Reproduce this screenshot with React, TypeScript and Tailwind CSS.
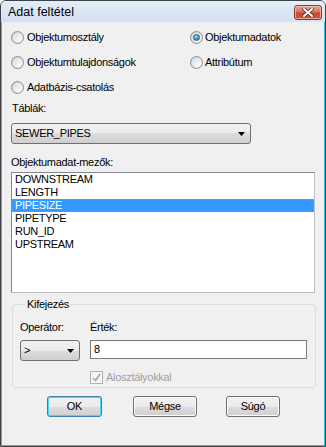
import React from "react";

const FONT = { fontFamily: '"Liberation Sans", Arial, sans-serif' };

function Radio({ checked }: { checked?: boolean }) {
  return (
    <div className="w-[13px] h-[13px] rounded-full border border-[#8d8f91] bg-[linear-gradient(135deg,#c9cbcd,#f7f8f8)] flex items-center justify-center shrink-0">
      <div className="w-[9px] h-[9px] rounded-full bg-[linear-gradient(135deg,#dcdcdc,#ffffff)] flex items-center justify-center">
        {checked && (
          <div className="w-[7px] h-[7px] rounded-full bg-[radial-gradient(circle_at_40%_35%,#b7e6fb,#3d8fd0_55%,#1d5a93)] border border-[#2c5f8f]" />
        )}
      </div>
    </div>
  );
}

function Arrow() {
  return (
    <svg width="7" height="4" viewBox="0 0 7 4" className="shrink-0">
      <path d="M0 0 H7 L3.5 4 Z" fill="#000" />
    </svg>
  );
}

function Combo({ text, w }: { text: string; w: string }) {
  return (
    <div
      className={`${w} h-[21px] rounded-[3px] border border-[#707070] bg-[linear-gradient(#f2f2f2,#ebebeb_50%,#dddddd_50%,#cfcfcf)] flex items-center justify-between pl-[3px] pr-[5px]`}
    >
      <span className="text-[11px] leading-[13px] text-black tracking-[-0.3px]">{text}</span>
      <Arrow />
    </div>
  );
}

function Button({ label, w, def }: { label: string; w: string; def?: boolean }) {
  return (
    <div
      className={`${w} h-[21px] rounded-[3px] border ${
        def ? "border-[#3c7fb1] shadow-[inset_0_0_0_1px_#48d8f9]" : "border-[#707070] shadow-[inset_0_0_0_1px_#fcfcfc]"
      } bg-[linear-gradient(#f2f2f2,#ebebeb_50%,#dddddd_50%,#cfcfcf)] flex items-center justify-center text-[11px] leading-[13px] text-black`}
    >
      {label}
    </div>
  );
}

const fields = ["DOWNSTREAM", "LENGTH", "PIPESIZE", "PIPETYPE", "RUN_ID", "UPSTREAM"];

export default function App() {
  return (
    <div className="w-[326px] h-[447px] bg-white" style={FONT}>
      <div className="w-[326px] h-[447px] flex flex-col border border-[#3f4347] rounded-t-[6px] overflow-hidden">
        {/* Title bar */}
        <div className="h-[21px] shrink-0 flex items-start justify-between bg-[linear-gradient(#e4edf8,#d3e1f1)] pl-[7px] pr-[3px]">
          <span className="mt-[4px] text-[12.5px] leading-[14px] text-black">Adat feltétel</span>
          <div className="mt-[4px] w-[28px] h-[15px] rounded-[3px] border border-[#8b3a2c] bg-[linear-gradient(#e8a493,#d8735f_45%,#c44a33_55%,#c85c45)] flex items-center justify-center shadow-[inset_0_0_0_1px_rgba(255,210,200,0.6)]">
            <svg width="12" height="9" viewBox="0 0 12 9">
              <path d="M2 1 L10 8 M10 1 L2 8" stroke="#5a2218" strokeWidth="3.4" strokeLinecap="square" />
              <path d="M2 1 L10 8 M10 1 L2 8" stroke="#ffffff" strokeWidth="2" strokeLinecap="square" />
            </svg>
          </div>
        </div>

        {/* Content */}
        <div className="flex-1 flex flex-col bg-[#f0f0f0] border-x border-b border-[#41b6e6] pl-[9px] text-[11px] leading-[13px] text-black tracking-[-0.3px]">
          {/* radios */}
          <div className="grid grid-cols-[179px_1fr] gap-y-[12px] pt-[9px]">
            <label className="flex items-center gap-[3px] h-[13px]">
              <Radio />
              <span>Objektumosztály</span>
            </label>
            <label className="flex items-center gap-[2px] h-[13px]">
              <Radio checked />
              <span>Objektumadatok</span>
            </label>
            <label className="flex items-center gap-[3px] h-[13px]">
              <Radio />
              <span>Objektumtulajdonságok</span>
            </label>
            <label className="flex items-center gap-[2px] h-[13px]">
              <Radio />
              <span>Attribútum</span>
            </label>
            <label className="flex items-center gap-[3px] h-[13px]">
              <Radio />
              <span>Adatbázis-csatolás</span>
            </label>
          </div>

          <div className="mt-[8px] ml-[1px] h-[13px]">Táblák:</div>
          <div className="mt-[8px]">
            <Combo text="SEWER_PIPES" w="w-[240px]" />
          </div>

          <div className="mt-[12px] h-[13px]">Objektumadat-mezők:</div>
          <div className="mt-[3px] w-[304px] h-[121px] bg-white border border-t-[#828790] border-l-[#828790] border-r-[#bcc1c8] border-b-[#bcc1c8] flex flex-col">
            {fields.map((f) =>
              f === "PIPESIZE" ? (
                <div
                  key={f}
                  className="h-[13px] bg-[#3399ff] text-white border border-dotted border-[#cc8844] pl-[2px] leading-[11px] flex items-center"
                >
                  {f}
                </div>
              ) : (
                <div key={f} className="h-[13px] pl-[3px] flex items-center">
                  {f}
                </div>
              )
            )}
          </div>

          {/* group */}
          <fieldset className="mt-[5px] ml-[1px] w-[304px] h-[90px] border border-[#d5dfe5] rounded-[3px] pl-[7px] min-w-0">
            <legend className="ml-[5px] px-[2px] h-[13px] leading-[13px]">Kifejezés</legend>
            <div className="grid grid-cols-[70px_217px] mt-[10px]">
              <div className="h-[13px]">Operátor:</div>
              <div className="h-[13px]">Érték:</div>
              <div className="mt-[6px]">
                <Combo text=">" w="w-[60px]" />
              </div>
              <div className="mt-[6px] h-[19px] bg-white border border-[#7a7a7a] flex items-center pl-[3px]">8</div>
              <div />
              <div className="mt-[10px] flex items-center gap-[3px] h-[13px]">
                <div className="w-[13px] h-[13px] border border-[#b1b1b1] bg-[#f4f4f4] flex items-center justify-center">
                  <svg width="9" height="9" viewBox="0 0 9 9">
                    <path d="M1 5 L3.5 7.5 L8 1" stroke="#a8a8a8" strokeWidth="1.6" fill="none" />
                  </svg>
                </div>
                <span className="text-[#a0a0a0]">Alosztályokkal</span>
              </div>
            </div>
          </fieldset>

          {/* buttons */}
          <div className="mt-[8px] flex">
            <div className="ml-[36px]">
              <Button label="OK" w="w-[55px]" def />
            </div>
            <div className="ml-[31px]">
              <Button label="Mégse" w="w-[64px]" />
            </div>
            <div className="ml-[29px]">
              <Button label="Súgó" w="w-[54px]" />
            </div>
          </div>
        </div>
      </div>
    </div>
  );
}
